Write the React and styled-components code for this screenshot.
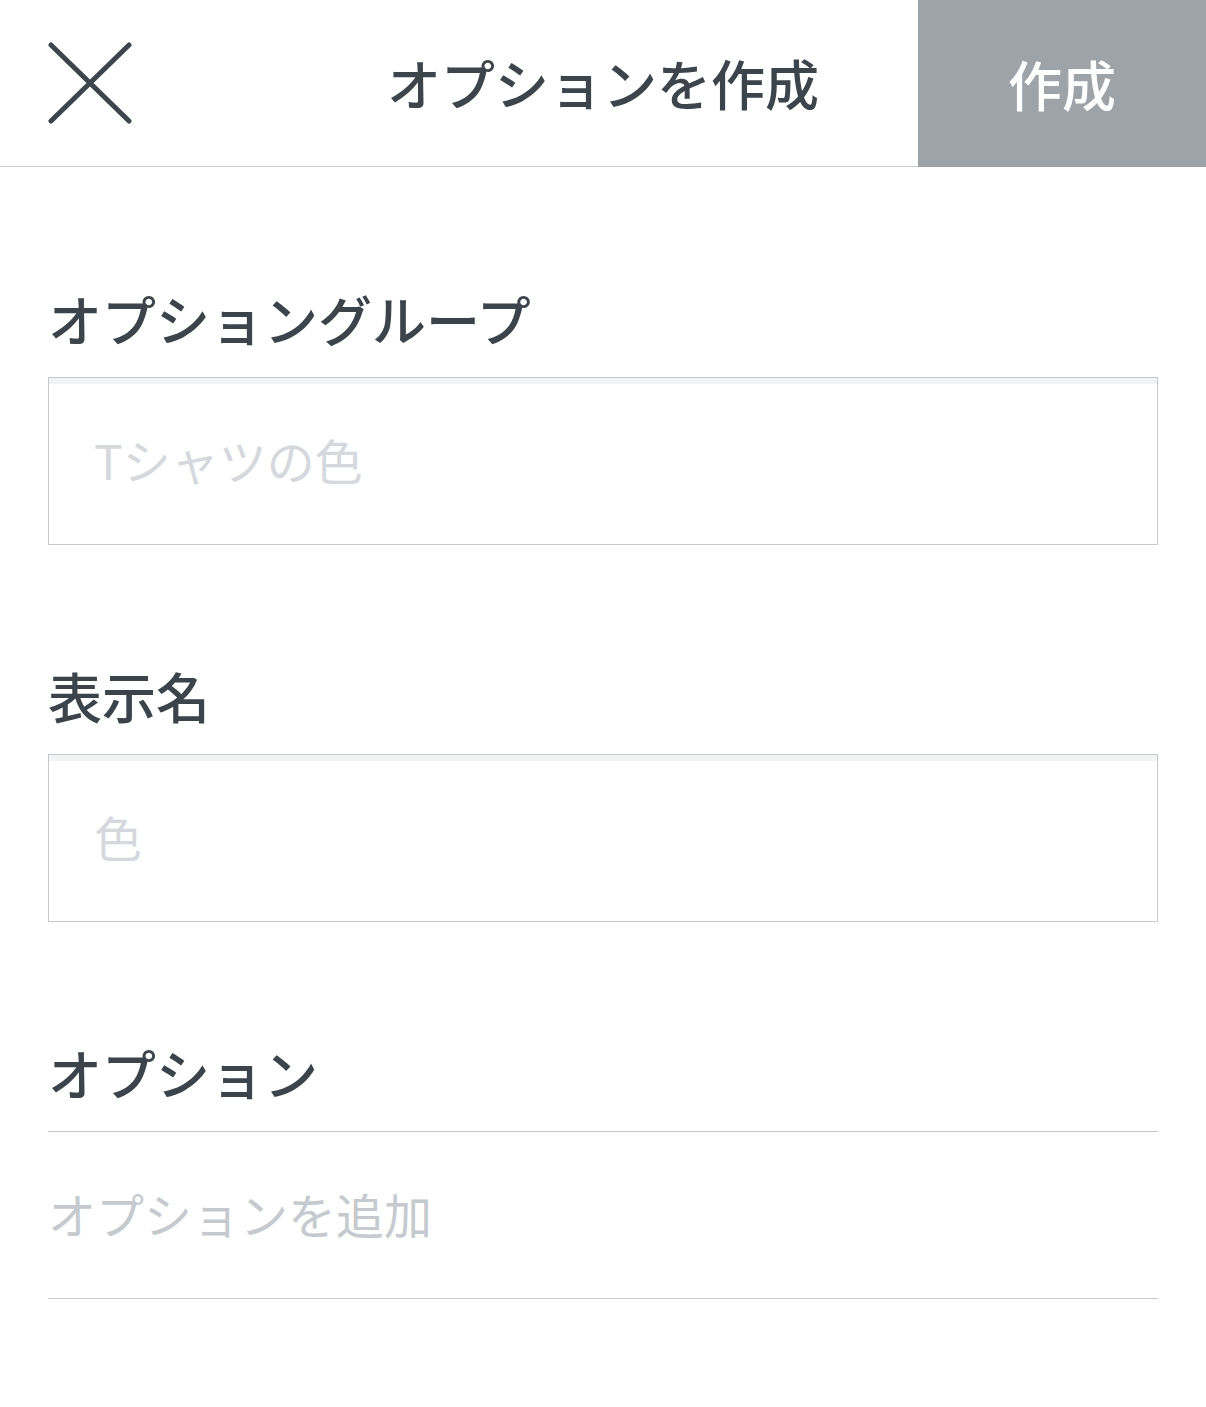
import styled, { createGlobalStyle } from 'styled-components';

const GlobalStyle = createGlobalStyle`
    * {
        box-sizing: border-box;
    }
    body {
        margin: 0;
        background: #ffffff;
        font-family: "Noto Sans CJK JP", "Noto Sans", sans-serif;
        color: #3c444b;
    }
`

const Header = styled.header`
    display: grid;
    grid-template-columns: 288px 1fr 288px;
    align-items: center;
    height: 167px;
    border-bottom: 1px solid #c9cacc;
`

const CloseButton = styled.button`
    justify-self: start;
    width: 84px;
    height: 82px;
    margin-left: 48px;
    padding: 0;
    border: 0;
    background: none;
    color: #3d454c;
    cursor: pointer;

    svg {
        display: block;
    }
`

const Title = styled.h1`
    margin: 0;
    text-align: center;
    font-size: 54px;
    font-weight: 500;
    line-height: 1;
    color: #3d454c;
`

const SubmitButton = styled.button`
    align-self: stretch;
    margin-bottom: -1px;
    border: 0;
    background: #9ea3a7;
    color: #ffffff;
    font-family: inherit;
    font-size: 54px;
    font-weight: 500;
`

const Form = styled.main`
    padding: 0 48px;
`

const Section = styled.section`
    padding-top: ${({ $first }) => ($first ? '124px' : '123px')};
`

const Label = styled.label`
    display: block;
    margin-bottom: 30px;
    font-size: 54px;
    font-weight: 500;
    line-height: 56px;
    color: #3c444b;
`

const Input = styled.input`
    display: block;
    width: 100%;
    height: 168px;
    padding: 0 45px 4px;
    border: 1px solid #c6c9cd;
    border-radius: 0;
    box-shadow: inset 0 6px 0 #f2f3f5;
    font-family: inherit;
    font-size: 48px;
    color: #3c444b;
    outline: none;

    &::placeholder {
        color: #d5d8dc;
    }
`

const OptionList = styled.div`
    border-top: 1px solid #c6c9cd;
    border-bottom: 1px solid #c6c9cd;
`

const AddOption = styled.div`
    display: flex;
    align-items: center;
    height: 166px;
    padding-bottom: 4px;
    font-size: 48px;
    color: #c5cacf;
`

const XIcon = () => (
    <svg width="84" height="82" viewBox="0 0 84 82" fill="none">
        <path d="M3 3 L81 79 M81 3 L3 79" stroke="currentColor" strokeWidth="5" strokeLinecap="round" />
    </svg>
)

export default function App() {
    return (
        <>
            <GlobalStyle />
            <Header>
                <CloseButton aria-label="閉じる"><XIcon /></CloseButton>
                <Title>オプションを作成</Title>
                <SubmitButton>作成</SubmitButton>
            </Header>
            <Form>
                <Section $first>
                    <Label>オプショングループ</Label>
                    <Input placeholder="Tシャツの色" />
                </Section>
                <Section>
                    <Label>表示名</Label>
                    <Input placeholder="色" />
                </Section>
                <Section>
                    <Label>オプション</Label>
                    <OptionList>
                        <AddOption>オプションを追加</AddOption>
                    </OptionList>
                </Section>
            </Form>
        </>
    )
}
